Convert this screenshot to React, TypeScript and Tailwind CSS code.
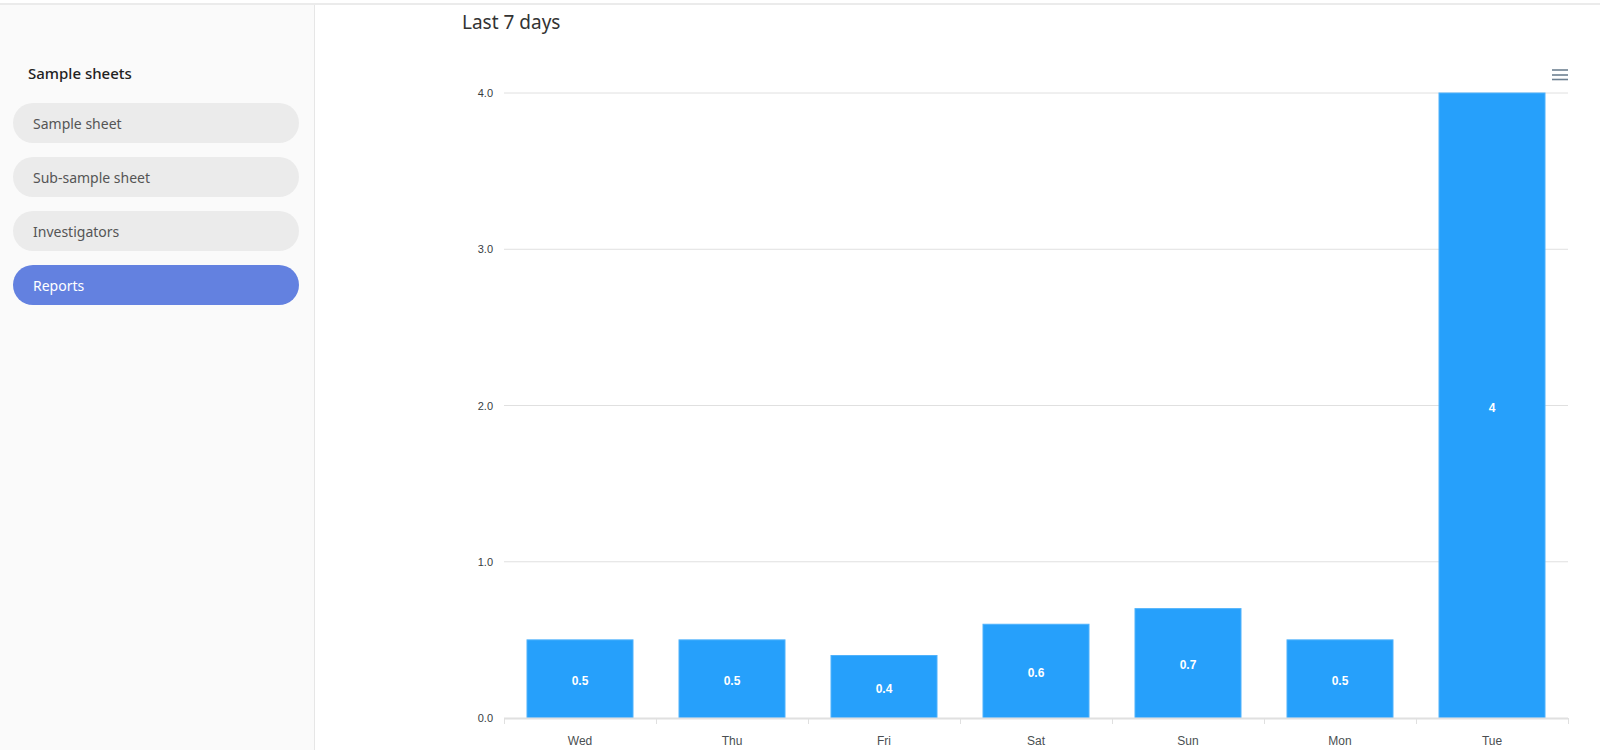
import React from "react";

const days = [
  { d: "Wed", v: 0.5 },
  { d: "Thu", v: 0.5 },
  { d: "Fri", v: 0.4 },
  { d: "Sat", v: 0.6 },
  { d: "Sun", v: 0.7 },
  { d: "Mon", v: 0.5 },
  { d: "Tue", v: 4 },
];

function Chart() {
  // svg origin at page x=452, y=40
  const ox = 452;
  const oy = 40;
  const left = 504 - ox;
  const right = 1568 - ox;
  const top = 92 - oy;
  const bottom = 717 - oy;
  const unit = (bottom - top) / 4;
  const cw = (right - left) / 7;
  const bw = 106;
  return (
    <svg width={1148} height={710} className="block" style={{ fontFamily: '"Liberation Sans", Arial, sans-serif' }}>
      {[4, 3, 2, 1].map((g) => (
        <line key={g} x1={left} x2={right} y1={bottom - g * unit} y2={bottom - g * unit} stroke="#e0e0e0" strokeWidth={1} />
      ))}
      {[4, 3, 2, 1, 0].map((g) => (
        <text key={g} x={41} y={bottom - g * unit + 4} textAnchor="end" fontSize={11} fill="#373d3f">
          {g.toFixed(1)}
        </text>
      ))}
      {days.map((it, i) => {
        const cx = left + cw * i + cw / 2;
        const h = it.v * unit;
        return (
          <g key={it.d}>
            <rect x={cx - bw / 2} y={bottom - h} width={bw} height={h} fill="#26a0fb" stroke="#4fb2fc" strokeWidth={1} />
            <text x={cx} y={bottom - h / 2 + 6} textAnchor="middle" fontSize={12} fontWeight="bold" fill="#ffffff">
              {it.v === 4 ? "4" : String(it.v)}
            </text>
            <text x={cx} y={bottom + 27} textAnchor="middle" fontSize={12} fill="#4a4f52">
              {it.d}
            </text>
          </g>
        );
      })}
      <line x1={left} x2={right} y1={bottom + 0.5} y2={bottom + 0.5} stroke="#e0e0e0" strokeWidth={2} />
      {Array.from({ length: 8 }).map((_, i) => (
        <line key={i} x1={left + cw * i + 0.5} x2={left + cw * i + 0.5} y1={bottom} y2={bottom + 6} stroke="#e0e0e0" strokeWidth={1} />
      ))}
      <g stroke="#6e8192" strokeWidth={1.6}>
        <line x1={1552 - ox} x2={1568 - ox} y1={69 - oy} y2={69 - oy} />
        <line x1={1552 - ox} x2={1568 - ox} y1={74 - oy} y2={74 - oy} />
        <line x1={1552 - ox} x2={1568 - ox} y1={78.5 - oy} y2={78.5 - oy} />
      </g>
    </svg>
  );
}

export default function App() {
  const items = ["Sample sheet", "Sub-sample sheet", "Investigators"];
  return (
    <div className="h-[750px] w-[1600px] overflow-hidden bg-white" style={{ fontFamily: '"Noto Sans", "Open Sans", sans-serif' }}>
      <div className="h-[3px] bg-white" />
      <div className="h-[2px] bg-[#ebebeb]" />
      <div className="flex h-[745px]">
        <aside className="w-[315px] shrink-0 border-r border-[#e6e6e6] bg-[#fafafa] px-[13px] pt-[55px]">
          <h2 className="mb-[17px] pl-[15px] text-[15px] font-medium leading-[26px] text-[#222]">Sample sheets</h2>
          <div className="flex flex-col gap-[14px]">
            {items.map((t) => (
              <div key={t} className="flex h-[40px] w-[286px] items-center rounded-full bg-[#ebebeb] pl-[20px] text-[14px] text-[#555]">
                {t}
              </div>
            ))}
            <div className="flex h-[40px] w-[286px] items-center rounded-full bg-[#6381e0] pl-[20px] text-[14px] text-white">
              Reports
            </div>
          </div>
        </aside>
        <main className="flex-1 pl-[137px]">
          <h1 className="h-[36px] pl-[10px] pt-[4px] text-[19px] leading-[27px] text-[#333]">Last 7 days</h1>
          <Chart />
        </main>
      </div>
    </div>
  );
}
